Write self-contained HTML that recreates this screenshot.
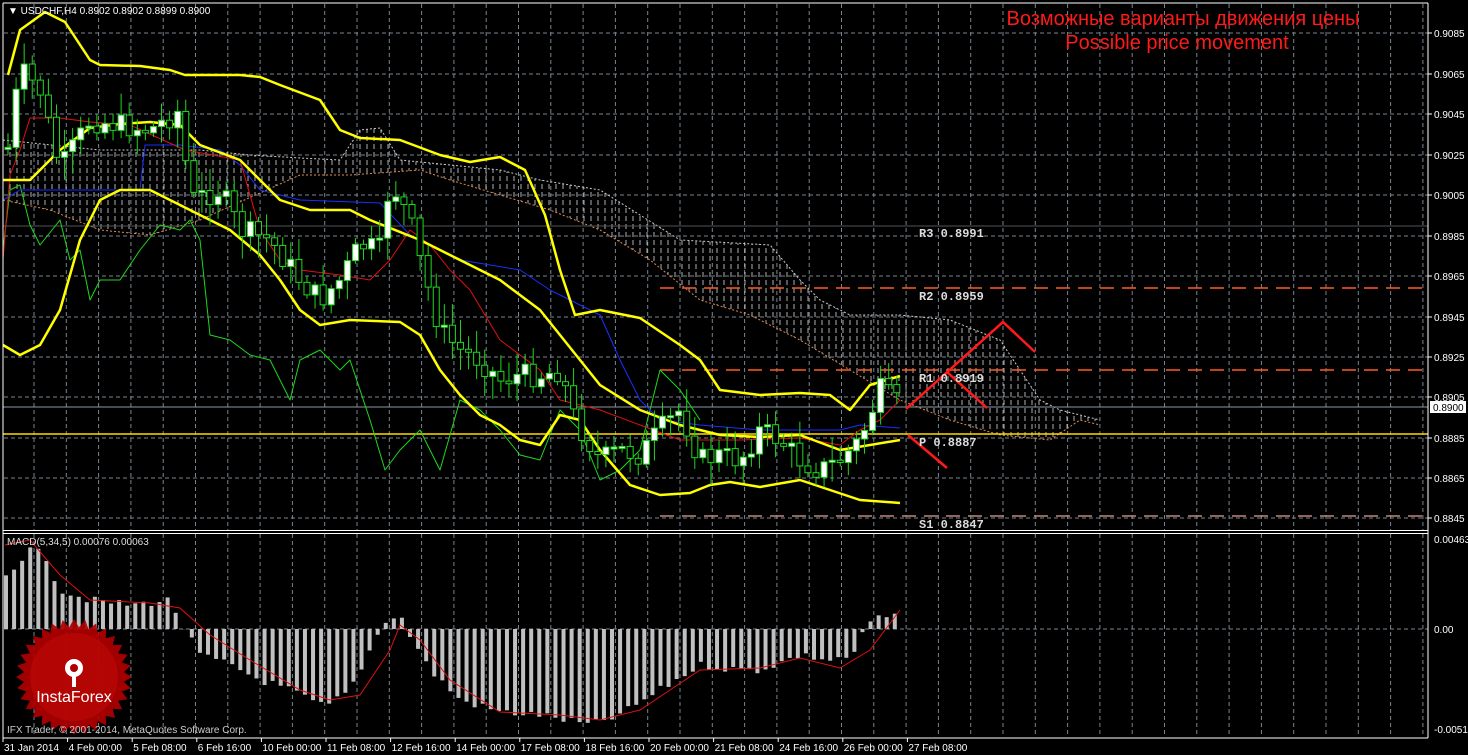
<!DOCTYPE html>
<html><head><meta charset="utf-8"><style>
html,body{margin:0;padding:0;background:#000;}
svg{display:block}
text{font-family:"Liberation Sans",sans-serif;}
</style></head><body>
<svg id="s" width="1468" height="755" xmlns="http://www.w3.org/2000/svg">
<defs>
<pattern id="hatch" width="7" height="8" patternUnits="userSpaceOnUse">
<line x1="3" y1="0" x2="3" y2="5" stroke="#ddd" stroke-width="1"/>
</pattern>
<clipPath id="main"><rect x="3" y="3" width="1425" height="527"/></clipPath>
<clipPath id="macd"><rect x="3" y="534" width="1425" height="203"/></clipPath>
</defs>
<rect width="1468" height="755" fill="#000"/>
<g id="grid"></g>
<g id="cloud" clip-path="url(#main)"></g>
<g id="lines" clip-path="url(#main)"></g>
<g id="candles" clip-path="url(#main)"></g>
<g id="arr"></g>
<g id="mac" clip-path="url(#macd)"></g>
<g transform="translate(74,677)">
<polygon id="star" fill="#b00000" opacity="0.92"/>
<circle r="44" fill="#c00808" opacity="0.6"/>
<g fill="#fff">
<circle cx="0" cy="-9" r="9"/>
<rect x="-2" y="-4" width="4" height="14"/>
</g>
<circle cx="0" cy="-9" r="4" fill="#b00000"/>
<text x="0" y="25" fill="#fff" font-size="16" text-anchor="middle">InstaForex</text>
</g>
<line x1="3" y1="3" x2="3" y2="738" stroke="#fff"/>
<line x1="1428" y1="3" x2="1428" y2="738" stroke="#fff"/>
<line x1="3" y1="3" x2="1428" y2="3" stroke="#fff"/>
<line x1="3" y1="530.5" x2="1428" y2="530.5" stroke="#fff"/>
<line x1="3" y1="533.5" x2="1428" y2="533.5" stroke="#fff"/>
<line x1="3" y1="738" x2="1428" y2="738" stroke="#fff"/>
<rect x="1430" y="401" width="36" height="12" fill="#fff"/>
<text x="1433" y="411" font-size="10" fill="#000">0.8900</text>
<text x="8" y="14" font-size="10" fill="#fff">▼ USDCHF,H4  0.8902 0.8902 0.8899 0.8900</text>
<text x="1183" y="25" font-size="20" fill="#ff1a1a" text-anchor="middle">Возможные варианты движения цены</text>
<text x="1177" y="49" font-size="20" fill="#ff1a1a" text-anchor="middle">Possible price movement</text>
<g font-weight="bold" font-size="12" fill="#ddd">
<text x="919" y="237" style="font-family:'Liberation Mono',monospace">R3 0.8991</text>
<text x="919" y="300" style="font-family:'Liberation Mono',monospace">R2 0.8959</text>
<text x="919" y="382" style="font-family:'Liberation Mono',monospace">R1 0.8919</text>
<text x="919" y="446" style="font-family:'Liberation Mono',monospace">P  0.8887</text>
<text x="919" y="528" style="font-family:'Liberation Mono',monospace">S1 0.8847</text>
</g>
<text x="7" y="545" font-size="10" fill="#ddd">MACD(5,34,5) 0.00076 0.00063</text>
<text x="7" y="733" font-size="10" fill="#ccc">IFX Trader, © 2001-2014, MetaQuotes Software Corp.</text>
<g id="axis" font-size="10" fill="#fff"></g>
</svg>
<script>
(function(){
var NS="http://www.w3.org/2000/svg";
function el(p,t,a){var e=document.createElementNS(NS,t);for(var k in a)e.setAttribute(k,a[k]);document.getElementById(p).appendChild(e);return e;}
function txt(p,x,y,s){var e=el(p,'text',{x:x,y:y});e.textContent=s;return e;}
for(var x=34;x<1428;x+=32.3){el('grid','line',{x1:x,y1:4,x2:x,y2:530,stroke:'#7a8590','stroke-dasharray':'4,3'});el('grid','line',{x1:x,y1:534,x2:x,y2:737,stroke:'#7a8590','stroke-dasharray':'4,3'});}
var py=[33,74,114,155,195,236,276,317,357,397,438,478,518],pl=['0.9085','0.9065','0.9045','0.9025','0.9005','0.8985','0.8965','0.8945','0.8925','0.8905','0.8885','0.8865','0.8845'];
py.forEach(function(y,i){el('grid','line',{x1:4,y1:y,x2:1428,y2:y,stroke:'#7a8590','stroke-dasharray':'4,3'});el('grid','line',{x1:1428,y1:y,x2:1432,y2:y,stroke:'#fff'});txt('axis',1434,y+4,pl[i]);});
el('grid','line',{x1:4,y1:629,x2:1428,y2:629,stroke:'#7a8590','stroke-dasharray':'4,3'});
txt('axis',1434,543,'0.00463');txt('axis',1434,633,'0.00');txt('axis',1434,733,'-0.00514');
var d=['31 Jan 2014','4 Feb 00:00','5 Feb 08:00','6 Feb 16:00','10 Feb 00:00','11 Feb 08:00','12 Feb 16:00','14 Feb 00:00','17 Feb 08:00','18 Feb 16:00','20 Feb 00:00','21 Feb 08:00','24 Feb 16:00','26 Feb 00:00','27 Feb 08:00'];
d.forEach(function(s,i){var x=3+i*64.6;el('grid','line',{x1:x,y1:738,x2:x,y2:742,stroke:'#fff'});txt('axis',x+1,751,s);});
el('lines','line',{x1:0,y1:226,x2:1428,y2:226,stroke:'#555'});
el('lines','line',{x1:660,y1:288,x2:1428,y2:288,stroke:'#ff5a20','stroke-dasharray':'14,8','stroke-width':1.5});
el('lines','line',{x1:660,y1:370,x2:1428,y2:370,stroke:'#ff5a20','stroke-dasharray':'14,8','stroke-width':1.5});
el('lines','line',{x1:660,y1:516,x2:1428,y2:516,stroke:'#c08878','stroke-dasharray':'14,8','stroke-width':1.5});
el('lines','line',{x1:0,y1:434,x2:1428,y2:434,stroke:'#ffd800','stroke-width':1.5});
el('lines','line',{x1:0,y1:407,x2:1428,y2:407,stroke:'#8a98a8'});
var up=[[3,140],[100,150],[200,150],[250,155],[300,158],[340,160],[360,130],[380,128],[400,160],[450,165],[500,170],[540,180],[600,190],[640,215],[680,240],[770,245],[800,280],[820,300],[850,315],[900,315],[950,320],[1000,340],[1040,400],[1060,410],[1100,420]];
var lo=[[3,200],[50,210],[100,230],[150,235],[200,220],[300,175],[350,175],[420,170],[450,180],[500,195],[550,210],[600,230],[650,260],[700,300],[750,315],[800,340],[850,370],[900,400],[950,420],[1000,435],[1050,440],[1080,420],[1100,425]];
function pts(a){return a.map(function(p){return p.join(',')}).join(' ');}
el('cloud','polygon',{points:pts(up.concat(lo.slice().reverse())),fill:'url(#hatch)',opacity:0.8});
el('cloud','polyline',{points:pts(lo),fill:'none',stroke:'#e08a50','stroke-dasharray':'2,2'});
el('cloud','polyline',{points:pts(up),fill:'none',stroke:'#ccc','stroke-dasharray':'2,2'});
function pl2(a,c,w){el('lines','polyline',{points:pts(a),fill:'none',stroke:c,'stroke-width':w,'stroke-linejoin':'round'});}
pl2([[3,250],[10,190],[20,185],[30,225],[40,245],[60,220],[70,260],[80,250],[90,300],[100,280],[120,280],[140,250],[160,225],[180,230],[190,220],[200,240],[210,335],[230,340],[250,355],[270,360],[290,400],[300,360],[320,350],[340,370],[350,360],[370,420],[385,470],[400,450],[420,430],[440,470],[460,400],[480,410],[500,430],[520,455],[540,460],[560,410],[580,430],[600,480],[620,470],[640,450],[660,370],[680,390],[700,420]],'#1ed81e',1);
pl2([[3,200],[20,190],[140,190],[145,145],[180,145],[220,150],[240,165],[260,190],[300,200],[380,203],[410,235],[420,240],[460,260],[520,270],[550,290],[570,300],[600,315],[620,360],[640,400],[660,420],[700,425],[760,430],[840,430],[860,425],[900,428]],'#1830ff',1);
pl2([[3,260],[10,175],[20,150],[30,118],[60,118],[90,122],[130,125],[185,150],[240,160],[260,230],[280,260],[300,270],[340,275],[370,280],[390,260],[410,230],[430,245],[450,270],[470,290],[500,340],[540,370],[560,400],[600,410],[640,425],[680,440],[740,440],[800,438],[840,445],[860,430],[880,420],[900,400]],'#e01010',1);
pl2([[8,75],[20,30],[45,12],[65,22],[90,60],[100,65],[140,66],[170,70],[185,75],[240,75],[260,77],[280,85],[320,100],[340,130],[360,138],[400,140],[440,155],[470,162],[500,157],[525,170],[545,215],[560,270],[575,315],[600,310],[640,318],[680,345],[700,360],[720,390],[760,395],[800,393],[830,395],[850,410],[870,385],[900,376]],'#ffff00',2.5);
pl2([[3,180],[30,180],[60,150],[90,128],[120,124],[150,122],[180,125],[200,145],[240,160],[280,200],[310,210],[350,210],[370,220],[420,240],[460,260],[500,280],[540,310],[580,360],[600,385],[640,410],[680,425],[720,435],[760,437],[800,435],[840,450],[870,445],[900,440]],'#ffff00',2.5);
pl2([[3,345],[20,355],[40,345],[60,310],[80,240],[100,200],[120,190],[150,190],[180,205],[200,215],[230,230],[260,255],[280,280],[300,310],[320,325],[350,320],[400,322],[420,335],[440,370],[460,395],[480,415],[500,425],[520,440],[540,445],[560,415],[580,420],[600,450],[630,485],[660,495],[690,493],[710,485],[730,482],[760,487],[800,480],[830,490],[860,500],[900,503]],'#ffff00',2.5);
el('arr','polyline',{points:'906,409 1003,322 1035,352',fill:'none',stroke:'#ff1a1a','stroke-width':2.5});
el('arr','line',{x1:947,y1:372,x2:987,y2:408,stroke:'#ff1a1a','stroke-width':2.5});
el('arr','line',{x1:908,y1:435,x2:947,y2:468,stroke:'#ff1a1a','stroke-width':2.5});
var mid=[[3,180],[20,70],[40,90],[60,170],[90,120],[120,125],[150,130],[180,110],[190,200],[220,190],[240,230],[270,240],[300,280],[320,300],[340,280],[360,245],[380,250],[390,180],[410,220],[420,260],[440,330],[460,350],[480,360],[500,380],[520,375],[540,375],[560,370],[575,420],[600,460],[620,450],[640,455],[660,430],[680,410],[700,460],[720,455],[740,460],[760,430],[780,440],[800,460],[820,470],[840,460],[860,440],[880,390],[900,405]];
function interp(a,x,def){for(var i=0;i<a.length-1;i++){if(x>=a[i][0]&&x<=a[i+1][0]){var t=(x-a[i][0])/(a[i+1][0]-a[i][0]);return a[i][1]+t*(a[i+1][1]-a[i][1]);}}return def;}
var seed=7;function rnd(){seed=(seed*9301+49297)%233280;return seed/233280;}
var prev=interp(mid,8,180);
for(var cx=8;cx<=900;cx+=8.08){var c=interp(mid,cx,405)+(rnd()-0.5)*24;var o=prev;var tp=Math.min(o,c),bt=Math.max(o,c);if(bt-tp<2)bt=tp+2;
var hi=tp-rnd()*20-3,lw=bt+rnd()*20+3;
el('candles','line',{x1:cx,y1:hi,x2:cx,y2:lw,stroke:'#1ed81e'});
el('candles','rect',{x:cx-3,y:tp,width:6,height:bt-tp,fill:(c<o?'#fff':'#000'),stroke:'#1ed81e'});prev=c;}
var env=[[5,575],[30,550],[45,555],[60,590],[90,600],[130,605],[170,600],[185,630],[200,655],[230,665],[260,680],[290,690],[320,705],[330,705],[350,690],[375,640],[385,620],[400,615],[410,635],[430,670],[460,700],[500,712],[540,715],[590,725],[620,715],[660,690],[700,665],[740,670],[760,670],[800,655],[830,660],[855,655],[865,625],[880,618],[900,615]];
for(var mx=6;mx<=900;mx+=8.08){var v=interp(env,mx,615)+(rnd()-0.5)*8;var a1=Math.min(v,629),b1=Math.max(v,629);el('mac','rect',{x:mx-2,y:a1,width:4,height:b1-a1,fill:'#c0c0c0'});}
el('mac','polyline',{points:'5,545 30,540 60,575 90,600 150,603 180,608 210,635 250,660 300,690 330,700 360,695 390,650 400,625 420,640 450,680 500,712 560,715 600,720 640,710 670,690 700,670 760,668 800,658 840,668 870,650 900,610',fill:'none',stroke:'#e01010'});
var s=[];for(var i=0;i<64;i++){var r=i%2?50:58,an=i*Math.PI/32;s.push((r*Math.cos(an)).toFixed(1)+','+(r*Math.sin(an)).toFixed(1));}
document.getElementById('star').setAttribute('points',s.join(' '));
})();
</script>
</body></html>
